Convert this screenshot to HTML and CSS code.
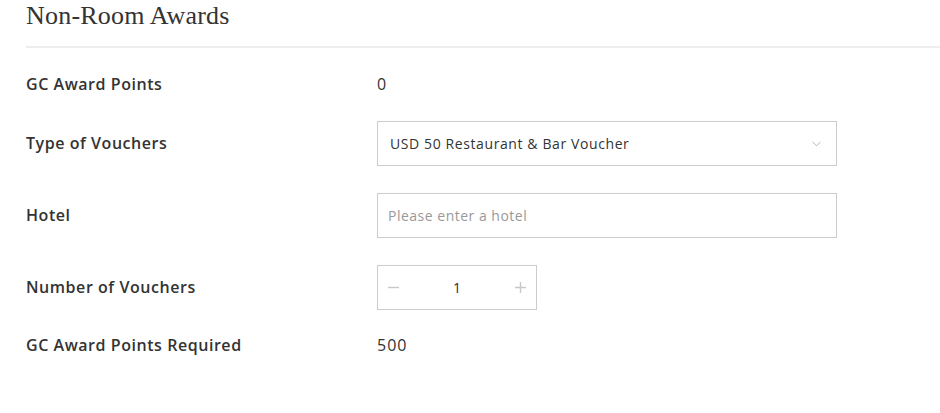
FILE: index.html
```html
<!DOCTYPE html>
<html>
<head>
<meta charset="utf-8">
<link rel="stylesheet" href="styles.css">
</head>
<body>
<div class="page">
  <div class="header">
    <h2 class="title">Non-Room Awards</h2>
  </div>
  <div class="form">
    <div class="row text-row first">
      <div class="label">GC Award Points</div>
      <div class="value">0</div>
    </div>
    <div class="row">
      <div class="label">Type of Vouchers</div>
      <div class="field select">
        <span class="select-text">USD 50 Restaurant &amp; Bar Voucher</span>
        <svg class="chevron" width="9" height="6" viewBox="0 0 9 6"><path d="M0.5 0.8 L4.5 4.8 L8.5 0.8" fill="none" stroke="#b5b5b5" stroke-width="1"/></svg>
      </div>
    </div>
    <div class="row">
      <div class="label">Hotel</div>
      <div class="field input">
        <span class="placeholder">Please enter a hotel</span>
      </div>
    </div>
    <div class="row">
      <div class="label">Number of Vouchers</div>
      <div class="stepper">
        <svg class="step-btn" width="11" height="11" viewBox="0 0 11 11"><path d="M0 5.5 H11" stroke="#c8c8c8" stroke-width="1.4"/></svg>
        <span class="step-value">1</span>
        <svg class="step-btn" width="11" height="11" viewBox="0 0 11 11"><path d="M0 5.5 H11 M5.5 0 V11" stroke="#c8c8c8" stroke-width="1.4"/></svg>
      </div>
    </div>
    <div class="row text-row last">
      <div class="label">GC Award Points Required</div>
      <div class="value">500</div>
    </div>
  </div>
</div>
</body>
</html>
```
FILE: styles.css
```css
html, body {
  margin: 0;
  padding: 0;
  background: #fff;
}
.page {
  padding-left: 26px;
  font-family: "Open Sans", "Noto Sans", sans-serif;
  color: #333;
}
.header {
  border-bottom: 2px solid #eeeeee;
  height: 46px;
}
.title {
  margin: 0;
  padding-top: 1px;
  font-family: "Liberation Serif", serif;
  font-weight: normal;
  font-size: 26px;
  line-height: 30px;
  color: #333;
  letter-spacing: 0.2px;
}
.form {
  display: flex;
  flex-direction: column;
  gap: 27px;
  padding-top: 26px;
}
.row {
  display: flex;
  align-items: center;
  min-height: 45px;
}
.text-row {
  min-height: 20px;
  line-height: 20px;
}
.last {
  margin-top: -2px;
}
.label {
  width: 351px;
  font-size: 16px;
  font-weight: 600;
  letter-spacing: 0.55px;
  color: #333;
  margin-top: -1px;
}
.value {
  font-size: 16px;
  letter-spacing: 1px;
  color: #333;
}
.field {
  box-sizing: border-box;
  width: 460px;
  height: 45px;
  border: 1px solid #cccccc;
  display: flex;
  align-items: center;
  font-size: 14px;
  letter-spacing: 0.6px;
}
.select {
  padding: 0 15px 0 12px;
  justify-content: space-between;
}
.select-text {
  color: #333;
}
.input {
  padding: 0 10px;
}
.placeholder {
  color: #999;
  letter-spacing: 0.5px;
}
.stepper {
  box-sizing: border-box;
  width: 160px;
  height: 45px;
  border: 1px solid #cccccc;
  display: flex;
  align-items: center;
  justify-content: space-between;
  padding: 0 10px;
}
.step-value {
  font-size: 14px;
  color: #3a2a2a;
}
```
